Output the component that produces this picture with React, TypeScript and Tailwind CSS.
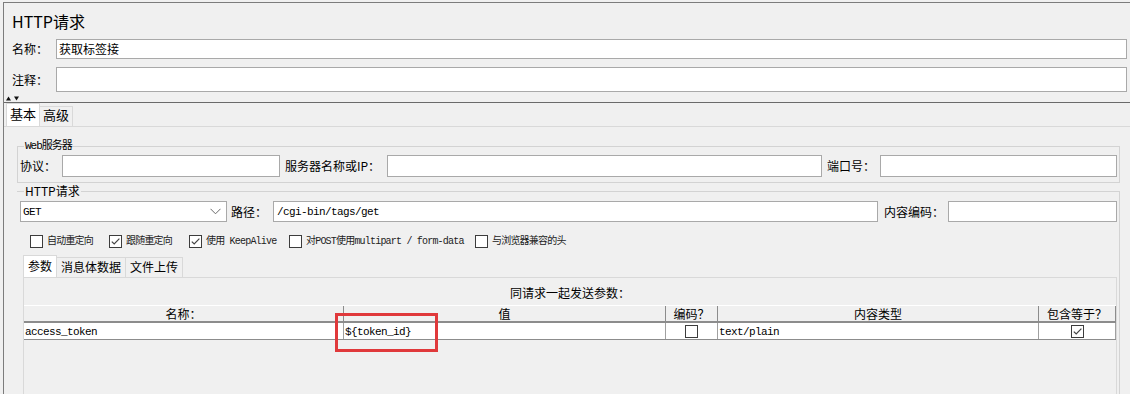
import React from "react";

const cjk = "font-['Noto_Sans_CJK_SC',sans-serif]";
const mono = "font-['Liberation_Mono','Noto_Sans_CJK_SC',monospace]";

function TextBox({ className = "", children }: { className?: string; children?: React.ReactNode }) {
  return (
    <div className={`bg-white border border-[#a9a9a9] flex items-center overflow-hidden whitespace-nowrap ${className}`}>
      {children}
    </div>
  );
}

function CheckBox({ checked }: { checked?: boolean }) {
  return (
    <div className="w-[13px] h-[13px] shrink-0 bg-white border border-[#3c3c3c] flex items-center justify-center">
      {checked && (
        <svg width="11" height="11" viewBox="0 0 11 11">
          <path d="M1.8 5.6 L4.2 8 L9.4 2.6" fill="none" stroke="#444" strokeWidth="1.2" />
        </svg>
      )}
    </div>
  );
}

function CheckItem({ checked, label, w }: { checked?: boolean; label: React.ReactNode; w: string }) {
  return (
    <div className="flex items-center gap-[4px]">
      <CheckBox checked={checked} />
      <span className={`${w} text-[10px] leading-[13px] whitespace-nowrap text-[#222] ${mono} tracking-[-0.8px]`}>{label}</span>
    </div>
  );
}

export default function App() {
  return (
    <div className={`relative w-[1130px] h-[394px] overflow-hidden bg-[#f0f0f0] pt-[2px] pl-[3px] text-black ${cjk}`}>
      <div className="h-full flex flex-col border-t border-l border-[#7c7c7c]">
        {/* title */}
        <div className="h-[36px] shrink-0 pl-[8px] pt-[8px] text-[16px] leading-[20px]">HTTP请求</div>
        {/* name */}
        <div className="h-[20px] shrink-0 flex items-stretch pr-[3px]">
          <div className="w-[52px] pl-[8px] flex items-center text-[12px] leading-[14px]">名称：</div>
          <TextBox className="flex-1 pl-[2px] text-[12px] leading-[14px]">获取标签接</TextBox>
        </div>
        {/* comment */}
        <div className="mt-[8px] h-[25px] shrink-0 flex items-stretch pr-[3px]">
          <div className="w-[52px] pl-[8px] flex items-center text-[12px] leading-[14px]">注释：</div>
          <TextBox className="flex-1" />
        </div>
        {/* splitter */}
        <div className="h-[10px] shrink-0 flex items-end pl-[2px] pb-[1px]">
          <svg width="16" height="5" viewBox="0 0 16 5">
            <path d="M0 4.5 L2.5 0.5 L5 4.5 Z" fill="#111" />
            <path d="M8 0.5 L13 0.5 L10.5 4.5 Z" fill="#111" />
          </svg>
        </div>
        <div className="h-[1px] shrink-0 bg-[#6a6a6a]" />
        {/* main tabs */}
        <div className="h-[23px] shrink-0 flex items-end pl-[2px] text-[13px] leading-[16px]">
          <div className="h-[23px] px-[3px] pt-[2px] bg-white border border-b-0 border-[#d9d9d9] flex items-start">基本</div>
          <div className="h-[20px] px-[3px] bg-[#f0f0f0] border border-b-0 border-l-0 border-[#d9d9d9] flex items-start">高级</div>
        </div>
        {/* main tab panel */}
        <div className="flex-1 min-h-0 border-t border-[#d9d9d9] flex flex-col pl-[13px] pr-[10px]">
          {/* Web server group */}
          <fieldset className="mt-[13px] shrink-0 border border-[#d3d3d3] p-0 pb-[5px] min-w-0">
            <legend className={`ml-[6px] px-[1px] text-[11px] leading-[12px] ${mono} tracking-[-1px]`}>Web服务器</legend>
            <div className="mt-[3px] h-[22px] flex items-stretch text-[12px] leading-[14px]">
              <div className="w-[44px] pl-[2px] flex items-center">协议：</div>
              <TextBox className="w-[218px]" />
              <div className="w-[107px] pl-[5px] flex items-center whitespace-nowrap">服务器名称或IP：</div>
              <TextBox className="w-[435px]" />
              <div className="w-[58px] pl-[5px] flex items-center whitespace-nowrap">端口号：</div>
              <TextBox className="flex-1 mr-[2px]" />
            </div>
          </fieldset>
          {/* HTTP request group */}
          <fieldset className="mt-[1px] flex-1 min-h-0 border border-l-0 border-b-0 border-[#d3d3d3] p-0 pl-[1px] min-w-0 flex flex-col">
            <legend className="ml-[6px] px-[1px] text-[12px] leading-[14px]">HTTP请求</legend>
            <div className="mt-[3px] h-[21px] shrink-0 flex items-stretch pl-[2px] text-[12px] leading-[14px]">
              <div className="w-[207px] bg-white border border-[#a9a9a9] flex items-center justify-between pl-[2px] pr-[5px]">
                <span className={`${mono} text-[11px] tracking-[-0.6px]`}>GET</span>
                <svg width="11" height="7" viewBox="0 0 11 7">
                  <path d="M0.5 0.8 L5.5 5.8 L10.5 0.8" fill="none" stroke="#6a6a6a" strokeWidth="1" />
                </svg>
              </div>
              <div className="w-[46px] pl-[4px] flex items-center whitespace-nowrap">路径：</div>
              <TextBox className="w-[605px] pl-[3px]">
                <span className={`${mono} text-[11px] tracking-[-0.6px]`}>/cgi-bin/tags/get</span>
              </TextBox>
              <div className="w-[70px] pl-[6px] flex items-center whitespace-nowrap">内容编码：</div>
              <TextBox className="flex-1 mr-[2px]" />
            </div>
            {/* checkboxes */}
            <div className="mt-[13px] h-[13px] shrink-0 flex items-center pl-[12px] gap-[14px]">
              <CheckItem w="w-[48px]" label="自动重定向" />
              <CheckItem w="w-[49px]" checked label="跟随重定向" />
              <CheckItem w="w-[69px]" checked label="使用 KeepAlive" />
              <CheckItem w="w-[155px]" label="对POST使用multipart / form-data" />
              <CheckItem w="w-[80px]" label="与浏览器兼容的头" />
            </div>
            {/* sub tabs */}
            <div className="mt-[7px] h-[22px] shrink-0 flex items-end pl-[5px] text-[12px] leading-[15px]">
              <div className="h-[22px] px-[4px] pt-[2px] bg-white border border-b-0 border-[#d9d9d9]">参数</div>
              <div className="h-[20px] px-[4px] pt-[1px] bg-[#f0f0f0] border border-b-0 border-l-0 border-[#d9d9d9]">消息体数据</div>
              <div className="h-[20px] px-[4px] pt-[1px] bg-[#f0f0f0] border border-b-0 border-l-0 border-[#d9d9d9]">文件上传</div>
            </div>
            {/* sub panel */}
            <div className="flex-1 min-h-0 ml-[5px] mr-[2px] border border-b-0 border-[#d9d9d9] flex flex-col">
              <div className="h-[27px] shrink-0 pt-[8px] text-center text-[12px] leading-[14px]">同请求一起发送参数：</div>
              {/* table header */}
              <div className="h-[18px] shrink-0 flex border-t border-white border-b-2 border-b-[#8c8c8c] text-[12px] leading-[15px]">
                <div className="w-[320px] border-r border-[#8c8c8c] text-center">名称：</div>
                <div className="w-[322px] border-r border-[#8c8c8c] text-center">值</div>
                <div className="w-[52px] border-r border-[#8c8c8c] text-center">编码？</div>
                <div className="w-[321px] border-r border-[#8c8c8c] text-center">内容类型</div>
                <div className="flex-1 border-r border-[#8c8c8c] text-center">包含等于？</div>
              </div>
              {/* table row */}
              <div className={`h-[17px] shrink-0 flex bg-white border-b border-[#8c8c8c] text-[11px] leading-[16px] ${mono} tracking-[-0.6px]`}>
                <div className="w-[320px] border-r border-[#a0a0a0] pl-[1px] pt-[1px]">access_token</div>
                <div className="w-[322px] border-r border-[#a0a0a0] pl-[1px] pt-[1px]">{"${token_id}"}</div>
                <div className="w-[52px] border-r border-[#a0a0a0] flex items-center justify-center">
                  <CheckBox />
                </div>
                <div className="w-[321px] border-r border-[#a0a0a0] pl-[1px] pt-[1px]">text/plain</div>
                <div className="flex-1 border-r border-[#a0a0a0] flex items-center justify-center">
                  <CheckBox checked />
                </div>
              </div>
            </div>
          </fieldset>
        </div>
      </div>
      {/* red highlight */}
      <div className="absolute left-[335px] top-[313px] w-[103px] h-[39px] border-[3px] border-[#e0393b]" />
    </div>
  );
}
